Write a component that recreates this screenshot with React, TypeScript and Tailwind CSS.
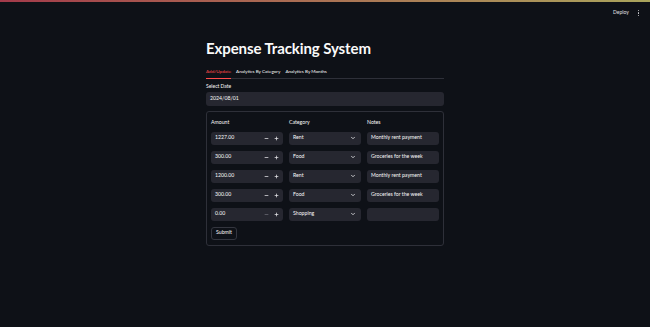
import { ChevronDown, Minus, Plus } from 'lucide-react';

type Row = { amount: string; category: string; notes: string };

const rows: Row[] = [
  { amount: '1227.00', category: 'Rent', notes: 'Monthly rent payment' },
  { amount: '300.00', category: 'Food', notes: 'Groceries for the week' },
  { amount: '1200.00', category: 'Rent', notes: 'Monthly rent payment' },
  { amount: '300.00', category: 'Food', notes: 'Groceries for the week' },
  { amount: '0.00', category: 'Shopping', notes: '' },
];

function AmountInput({ value }: { value: string }) {
  const atMin = value === '0.00';
  return (
    <div className="flex h-[13px] items-center rounded-[3px] bg-[#262730] pl-[4px] pr-[4px]">
      <span className="flex-1 text-[5.2px] text-[#fafafa]">{value}</span>
      <Minus className={`mr-[5px] h-[5px] w-[5px] ${atMin ? 'text-[#6b6c75]' : 'text-[#e8e8ea]'}`} strokeWidth={3.5} />
      <Plus className="h-[5px] w-[5px] text-[#e8e8ea]" strokeWidth={3.5} />
    </div>
  );
}

function CategorySelect({ value }: { value: string }) {
  return (
    <div className="flex h-[13px] items-center rounded-[3px] bg-[#262730] pl-[4px] pr-[5px]">
      <span className="flex-1 text-[5.2px] text-[#fafafa]">{value}</span>
      <ChevronDown className="h-[6px] w-[6px] text-[#d8d8dc]" strokeWidth={3.5} />
    </div>
  );
}

function NotesInput({ value }: { value: string }) {
  return (
    <div className="flex h-[13px] items-center rounded-[3px] bg-[#262730] pl-[4px]">
      <span className="text-[5.2px] text-[#fafafa]">{value}</span>
    </div>
  );
}

export default function App() {
  return (
    <div className="min-h-[327px] bg-[#0e1117] text-[#fafafa]" style={{ fontFamily: 'Lato, "Noto Sans", sans-serif' }}>
      <div className="h-[2px] bg-gradient-to-r from-[#a33a4a] to-[#a9a45c]" />
      <header className="flex h-[22px] items-center justify-end pr-[11px]">
        <span className="mr-[9px] text-[5px] text-[#e0e0e4]">Deploy</span>
        <div className="flex flex-col gap-[1px]">
          <span className="h-[1.2px] w-[1.2px] rounded-full bg-[#d0d0d4]" />
          <span className="h-[1.2px] w-[1.2px] rounded-full bg-[#d0d0d4]" />
          <span className="h-[1.2px] w-[1.2px] rounded-full bg-[#d0d0d4]" />
        </div>
      </header>

      <main className="mx-auto w-[238px] pt-[14px]">
        <h1 className="text-[15px] font-bold leading-[20px] tracking-[-0.1px] text-[#fafafa]">
          Expense Tracking System
        </h1>

        <div className="mt-[10px] flex gap-[5px] border-b border-[#2e3039] text-[4.6px]">
          <div className="-mb-px border-b-[1.5px] border-[#ff4b4b] pb-[3px] text-[#ff4b4b]">Add/Update</div>
          <div className="pb-[3px]">Analytics By Category</div>
          <div className="pb-[3px]">Analytics By Months</div>
        </div>

        <div className="mt-[4px] text-[5px] leading-[7px]">Select Date</div>
        <div className="mt-[2px] flex h-[14px] items-center rounded-[3px] bg-[#262730] pl-[4px] text-[5.2px]">
          2024/08/01
        </div>

        <div className="mt-[5px] rounded-[3px] border border-[#2e3039] px-[4px] pb-[5px] pt-[6px]">
          <div className="grid grid-cols-3 gap-x-[6px] text-[5.2px] leading-[8px]">
            <div>Amount</div>
            <div>Category</div>
            <div>Notes</div>
          </div>
          <div className="mt-[6px] flex flex-col gap-[6px]">
            {rows.map((r, i) => (
              <div key={i} className="grid grid-cols-3 gap-x-[6px]">
                <AmountInput value={r.amount} />
                <CategorySelect value={r.category} />
                <NotesInput value={r.notes} />
              </div>
            ))}
          </div>
          <button className="mt-[6px] flex h-[13px] w-[26px] items-center justify-center rounded-[3px] border border-[#34363f] text-[5.2px] text-[#fafafa]">
            Submit
          </button>
        </div>
      </main>
    </div>
  );
}
